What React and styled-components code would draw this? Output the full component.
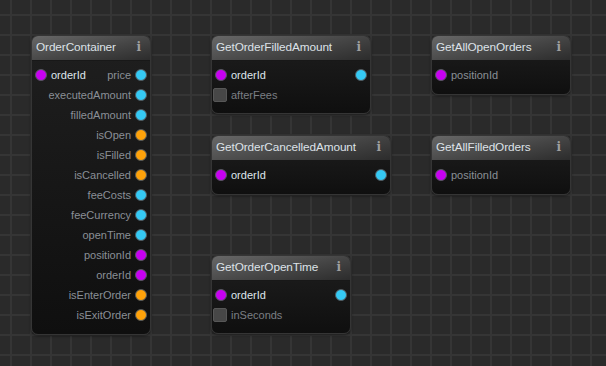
import React from "react";
import styled, { createGlobalStyle } from "styled-components";

const GlobalStyle = createGlobalStyle`
  html, body {
    margin: 0;
    padding: 0;
    background: #2b2b2b;
  }
`;

const PORT = {
  purple: "#c800f2",
  cyan: "#35c9f4",
  orange: "#ffa20a",
};

const Canvas = styled.div`
  position: relative;
  width: 606px;
  height: 366px;
  overflow: hidden;
  background-color: #2a2a2a;
  background-image: linear-gradient(to right, #353535 2px, transparent 2px),
    linear-gradient(to bottom, #353535 2px, transparent 2px);
  background-size: 20px 20px;
  background-position: 10px 14px;
  font-family: "Liberation Sans", Arial, sans-serif;
`;

const NodeBox = styled.div`
  position: absolute;
  box-sizing: border-box;
  border-radius: 7px;
  border: 1px solid #353535;
  background: linear-gradient(to bottom, #1f1f1f, #0f0f0f);
  box-shadow: 0 1px 3px rgba(0, 0, 0, 0.5);
  overflow: hidden;
  padding-bottom: 9px;
`;

const Header = styled.div`
  height: 25px;
  box-sizing: border-box;
  display: flex;
  align-items: center;
  justify-content: space-between;
  padding: 0 9px 3px 4px;
  background: linear-gradient(168deg, #686868 0%, #464646 55%, #2c2c2c 100%);
  border-bottom: 1px solid #181818;
`;

const Title = styled.span`
  color: #dde2e8;
  font-size: 11.8px;
  letter-spacing: -0.1px;
  white-space: nowrap;
`;

const InfoMark = styled.span`
  color: #a0a0a0;
  font-family: "DejaVu Serif", serif;
  font-weight: bold;
  font-size: 12px;
`;

const Body = styled.div`
  padding-top: 4px;
`;

const Row = styled.div`
  height: 20px;
  display: flex;
  align-items: center;
  padding: 0 3px;
`;

const Port = styled.span`
  display: flex;
  align-items: center;
  gap: 4px;
  margin-left: ${(p) => (p.$right ? "auto" : "0")};
`;

const Dot = styled.span`
  width: 12px;
  height: 12px;
  border-radius: 50%;
  box-sizing: border-box;
  background: ${(p) => p.$color};
  border: 1px solid #555a5e;
`;

const Label = styled.span`
  font-size: 11px;
  color: ${(p) => (p.$bright ? "#dfe5ec" : p.$faint ? "#7b7f84" : "#8a8f96")};
  white-space: nowrap;
`;

const CheckRow = styled(Row)`
  height: 19px;
  padding-left: 1px;
  gap: 4px;
`;

const Check = styled.span`
  width: 14px;
  height: 14px;
  box-sizing: border-box;
  border-radius: 2px;
  background: #474747;
  border: 1px solid #575757;
`;

function Node({ x, y, width, title, left, rights = [], check, dimLeft }) {
  const count = Math.max(rights.length, left ? 1 : 0);
  const rows = Array.from({ length: count }, (_, i) => ({
    left: i === 0 ? left : null,
    right: rights[i],
  }));
  return (
    <NodeBox style={{ left: x, top: y, width }}>
      <Header>
        <Title>{title}</Title>
        <InfoMark>i</InfoMark>
      </Header>
      <Body>
        {rows.map((r, i) => (
          <Row key={i}>
            {r.left && (
              <Port>
                <Dot $color={PORT[r.left.color]} />
                <Label $bright={!dimLeft}>{r.left.label}</Label>
              </Port>
            )}
            {r.right && (
              <Port $right>
                {r.right.label && <Label>{r.right.label}</Label>}
                <Dot $color={PORT[r.right.color]} />
              </Port>
            )}
          </Row>
        ))}
        {check && (
          <CheckRow>
            <Check />
            <Label $faint>{check}</Label>
          </CheckRow>
        )}
      </Body>
    </NodeBox>
  );
}

const containerOutputs = [
  { label: "price", color: "cyan" },
  { label: "executedAmount", color: "cyan" },
  { label: "filledAmount", color: "cyan" },
  { label: "isOpen", color: "orange" },
  { label: "isFilled", color: "orange" },
  { label: "isCancelled", color: "orange" },
  { label: "feeCosts", color: "cyan" },
  { label: "feeCurrency", color: "cyan" },
  { label: "openTime", color: "cyan" },
  { label: "positionId", color: "purple" },
  { label: "orderId", color: "purple" },
  { label: "isEnterOrder", color: "orange" },
  { label: "isExitOrder", color: "orange" },
];

export default function App() {
  return (
    <>
      <GlobalStyle />
      <Canvas>
        <Node
          x={31}
          y={35}
          width={120}
          title="OrderContainer"
          left={{ label: "orderId", color: "purple" }}
          rights={containerOutputs}
        />
        <Node
          x={211}
          y={35}
          width={160}
          title="GetOrderFilledAmount"
          left={{ label: "orderId", color: "purple" }}
          rights={[{ color: "cyan" }]}
          check="afterFees"
        />
        <Node
          x={211}
          y={135}
          width={180}
          title="GetOrderCancelledAmount"
          left={{ label: "orderId", color: "purple" }}
          rights={[{ color: "cyan" }]}
        />
        <Node
          x={211}
          y={255}
          width={140}
          title="GetOrderOpenTime"
          left={{ label: "orderId", color: "purple" }}
          rights={[{ color: "cyan" }]}
          check="inSeconds"
        />
        <Node
          x={431}
          y={35}
          width={140}
          title="GetAllOpenOrders"
          left={{ label: "positionId", color: "purple" }}
          dimLeft
        />
        <Node
          x={431}
          y={135}
          width={140}
          title="GetAllFilledOrders"
          left={{ label: "positionId", color: "purple" }}
          dimLeft
        />
      </Canvas>
    </>
  );
}
